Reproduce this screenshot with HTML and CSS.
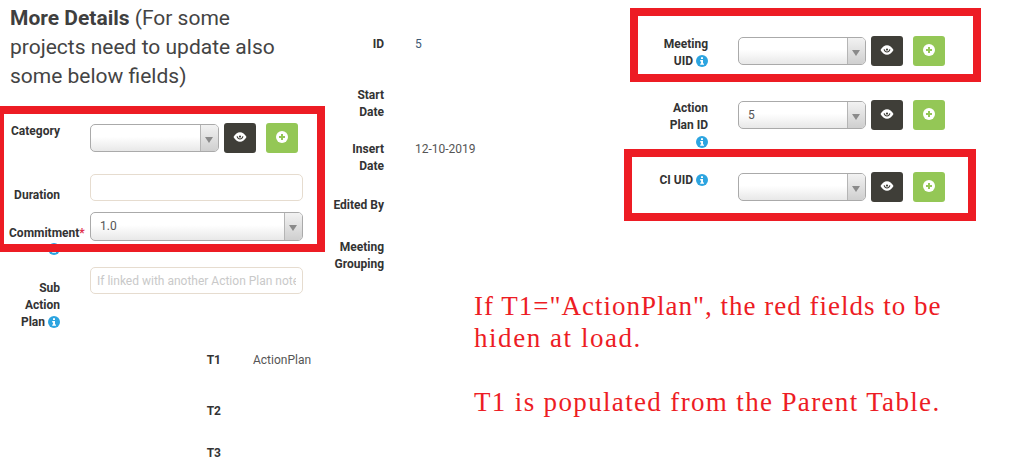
FILE: index.html
```html
<!DOCTYPE html>
<html lang="en">
<head>
<meta charset="utf-8">
<title>More Details</title>
<link rel="stylesheet" href="styles.css">
</head>
<body>
<svg class="defs" aria-hidden="true">
  <symbol id="eye" viewBox="0 0 14 12">
    <path d="M0.5 6C2.2 2.8 4.5 1.2 7 1.2S11.8 2.8 13.5 6C11.8 9.2 9.5 10.8 7 10.8S2.2 9.2 0.5 6Z" fill="#fff"/>
    <path d="M4.2 5.2A2.8 2.8 0 1 0 9.8 5.2" fill="none" stroke="#3f3e38" stroke-width="1.1"/>
    <circle cx="7" cy="5.6" r="1.1" fill="#3f3e38"/>
  </symbol>
  <symbol id="plus" viewBox="0 0 12 12">
    <circle cx="6" cy="6" r="6" fill="#fff"/>
    <path d="M6 3V9M3 6H9" stroke="#94c756" stroke-width="2"/>
  </symbol>
  <symbol id="info" viewBox="0 0 12 12">
    <circle cx="6" cy="6" r="6" fill="#2ca4e0"/>
    <path d="M5 2.2H7V3.9H5ZM4.2 5H7V8.4H8V9.8H4.2V8.4H5.1V6.4H4.2Z" fill="#fff"/>
  </symbol>
</svg>

<main class="page">
  <section class="col col-left">
    <h2 class="title"><b>More Details</b> (For some<br>projects need to update also<br>some below fields)</h2>

    <div class="row row-category">
      <label class="label">Category</label>
      <div class="select select-short"><span class="select-value"></span><span class="select-arrow"></span></div>
      <button class="btn btn-dark"><svg class="btn-eye"><use href="#eye"/></svg></button>
      <button class="btn btn-green"><svg class="btn-plus"><use href="#plus"/></svg></button>
    </div>

    <div class="row row-duration">
      <label class="label">Duration</label>
      <input class="input" type="text">
    </div>

    <div class="row row-commitment">
      <label class="label">Commitment<span class="req">*</span> <svg class="info"><use href="#info"/></svg></label>
      <div class="select select-wide"><span class="select-value">1.0</span><span class="select-arrow"></span></div>
    </div>

    <div class="row row-sub">
      <label class="label">Sub<br>Action<br>Plan <svg class="info"><use href="#info"/></svg></label>
      <input class="input" type="text" placeholder="If linked with another Action Plan note which">
    </div>

    <div class="pair pair-t1"><span class="label">T1</span><span class="value">ActionPlan</span></div>
    <div class="pair pair-t2"><span class="label">T2</span></div>
    <div class="pair pair-t3"><span class="label">T3</span></div>
  </section>

  <section class="col col-mid">
    <div class="info-row info-id"><span class="label">ID</span><span class="value value-id">5</span></div>
    <div class="info-row info-start"><span class="label">Start Date</span></div>
    <div class="info-row info-insert"><span class="label">Insert Date</span><span class="value">12-10-2019</span></div>
    <div class="info-row info-edited"><span class="label">Edited By</span></div>
    <div class="info-row info-grouping"><span class="label">Meeting Grouping</span></div>
  </section>

  <section class="col col-right">
    <div class="row row-meeting">
      <label class="label">Meeting<br>UID <svg class="info"><use href="#info"/></svg></label>
      <div class="select select-short"><span class="select-value"></span><span class="select-arrow"></span></div>
      <button class="btn btn-dark"><svg class="btn-eye"><use href="#eye"/></svg></button>
      <button class="btn btn-green"><svg class="btn-plus"><use href="#plus"/></svg></button>
    </div>
    <div class="row row-action">
      <label class="label">Action<br>Plan ID<br><svg class="info"><use href="#info"/></svg></label>
      <div class="select select-short"><span class="select-value">5</span><span class="select-arrow"></span></div>
      <button class="btn btn-dark"><svg class="btn-eye"><use href="#eye"/></svg></button>
      <button class="btn btn-green"><svg class="btn-plus"><use href="#plus"/></svg></button>
    </div>
    <div class="row row-ci">
      <label class="label">CI UID <svg class="info"><use href="#info"/></svg></label>
      <div class="select select-short"><span class="select-value"></span><span class="select-arrow"></span></div>
      <button class="btn btn-dark"><svg class="btn-eye"><use href="#eye"/></svg></button>
      <button class="btn btn-green"><svg class="btn-plus"><use href="#plus"/></svg></button>
    </div>
    <div class="note">
      <p>If T1="ActionPlan", the red fields to be<br><span class="note-tail">hiden at load.</span></p>
      <p class="note-last">T1 is populated from the Parent Table.</p>
    </div>
  </section>

  <div class="frame frame-left"></div>
  <div class="frame frame-meeting"></div>
  <div class="frame frame-ci"></div>
</main>
</body>
</html>
```

FILE: styles.css
```css
* { box-sizing: border-box; }
html, body { margin: 0; padding: 0; background: #fff; }
body { width: 1034px; height: 467px; overflow: hidden; font-family: Roboto, "Liberation Sans", sans-serif; }
.defs { display: none; }

.page { position: relative; display: grid; grid-template-columns: 330px 144px 560px; width: 1034px; height: 467px; overflow: hidden; }

.title { margin: 4px 0 0 10px; height: 87px; font-size: 21px; line-height: 29px; font-weight: 400; color: #444; white-space: nowrap; }
.title b { font-weight: 700; color: #3f3f3f; }

.label { display: block; font-size: 12px; line-height: 17px; font-weight: 700; color: #333; text-align: right; }
.value { font-size: 12px; line-height: 17px; color: #555; white-space: nowrap; }
.value-id { color: #3d5a75; }
.req { color: #e0304a; }
.info { display: inline-block; width: 12px; height: 12px; vertical-align: -2px; }

.row { display: flex; align-items: flex-start; }
.row > .label { flex: none; width: 60px; margin-right: 30px; }

.select { position: relative; flex: none; display: flex; height: 28px; border: 1px solid #aaa; border-radius: 5px; background: linear-gradient(#fff 45%, #e8e8e8); overflow: hidden; }
.select-short { width: 129px; margin-top: 1px; }
.select-wide { width: 213px; height: 29px; }
.select-value { flex: 1; padding: 0 9px; font-size: 12px; line-height: 26px; color: #555; }
.select-arrow { position: relative; flex: none; width: 18px; border-left: 1px solid #b5b5b5; background: linear-gradient(#f2f2f2, #cfcfcf); }
.select-arrow::after { content: ""; position: absolute; left: 4px; top: 12px; border: 4px solid transparent; border-top: 6px solid #8a8a8a; border-bottom: 0; }

.btn { flex: none; display: flex; align-items: center; justify-content: center; width: 32px; height: 30px; padding: 0 0 3px; border: 0; border-radius: 3px; }
.btn-dark { margin-left: 5px; background: #3f3e38; }
.btn-green { margin-left: 10px; background: #94c756; }
.btn-eye { width: 14px; height: 12px; }
.btn-plus { width: 12px; height: 12px; }

.input { flex: none; width: 213px; height: 27px; padding: 0 6px; border: 1px solid #e6dccf; border-radius: 5px; background: #fff; font: 12px Roboto, sans-serif; color: #555; }
.input::placeholder { color: #c9c9c9; opacity: 1; }

.row-category { margin-top: 32px; height: 51px; }
.row-duration { height: 38px; }
.row-duration .label { padding-top: 13px; }
.row-commitment { height: 55px; }
.row-commitment .label { width: 76px; padding-top: 13px; margin-left: 9px; margin-right: 5px; text-align: left; }
.row-commitment .info { display: block; margin: 1px 0 0 39px; }
.row-sub { height: 85px; }
.row-sub .label { padding-top: 13px; }

.pair { display: flex; margin-left: 151px; }
.pair .label { width: 70px; flex: none; }
.pair .value { margin-left: 32px; }
.pair-t1 { height: 51px; }
.pair-t2 { height: 42px; }
.pair-t3 { height: 17px; }

.info-row { display: flex; align-items: flex-start; }
.info-row .label { flex: none; width: 54px; }
.info-row .value { margin-left: 31px; }
.info-id { margin-top: 36px; height: 51px; }
.info-start { height: 54px; }
.info-insert { height: 56px; }
.info-edited { height: 42px; }

.col-right { padding-left: 174px; }
.row-meeting { margin-top: 36px; height: 64px; }
.row-action { height: 72px; }
.row-ci { height: 118px; }
.row-meeting .select, .row-action .select, .row-ci .select { width: 128px; }

.note { margin: 0 0 0 -174px; width: 500px; font-family: "Liberation Serif", serif; font-size: 27px; letter-spacing: 1px; line-height: 32px; color: #ed1c24; }
.note p { margin: 0 0 32px; }
.note-tail { letter-spacing: 1.55px; }
.note .note-last { letter-spacing: 1.35px; }

.frame { position: absolute; border: 8px solid #ed1c24; pointer-events: none; }
.frame-left { left: 0; top: 106px; width: 325px; height: 146px; border-left-width: 4px; }
.frame-meeting { left: 630px; top: 8px; width: 351px; height: 74px; }
.frame-ci { left: 624px; top: 149px; width: 352px; height: 72px; }
```
